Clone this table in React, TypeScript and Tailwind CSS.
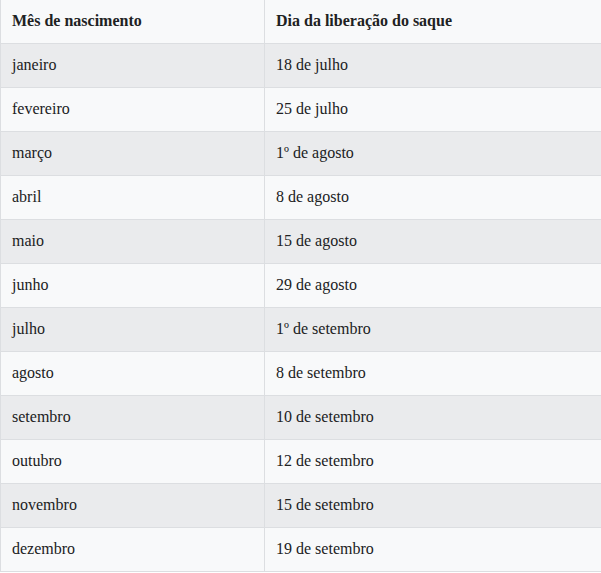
import React from 'react';

const rows: [string, string][] = [
  ['janeiro', '18 de julho'],
  ['fevereiro', '25 de julho'],
  ['março', '1º de agosto'],
  ['abril', '8 de agosto'],
  ['maio', '15 de agosto'],
  ['junho', '29 de agosto'],
  ['julho', '1º de setembro'],
  ['agosto', '8 de setembro'],
  ['setembro', '10 de setembro'],
  ['outubro', '12 de setembro'],
  ['novembro', '15 de setembro'],
  ['dezembro', '19 de setembro'],
];

const App = () => {
  return (
    <div className="bg-white w-[601px] h-[573px] overflow-hidden">
      <table
        className="w-[620px] border-collapse text-[16px] text-[#202122]"
        style={{ fontFamily: '"Liberation Serif", "DejaVu Serif", serif' }}
      >
        <thead>
          <tr className="bg-[#f8f9fa]">
            <th className="w-[264px] h-[43px] pl-[11px] pr-3 text-left font-bold border border-[#dcdee1] border-t-0">
              Mês de nascimento
            </th>
            <th className="h-[43px] pl-[11px] pr-3 text-left font-bold border border-[#dcdee1] border-t-0">
              Dia da liberação do saque
            </th>
          </tr>
        </thead>
        <tbody>
          {rows.map(([month, day], i) => (
            <tr key={month} className={i % 2 === 0 ? 'bg-[#eaebed]' : 'bg-[#f8f9fa]'}>
              <td className="h-[44px] pl-[11px] pr-3 border border-[#dcdee1]">{month}</td>
              <td className="h-[44px] pl-[11px] pr-3 border border-[#dcdee1]">{day}</td>
            </tr>
          ))}
        </tbody>
      </table>
    </div>
  );
};

export default App;
